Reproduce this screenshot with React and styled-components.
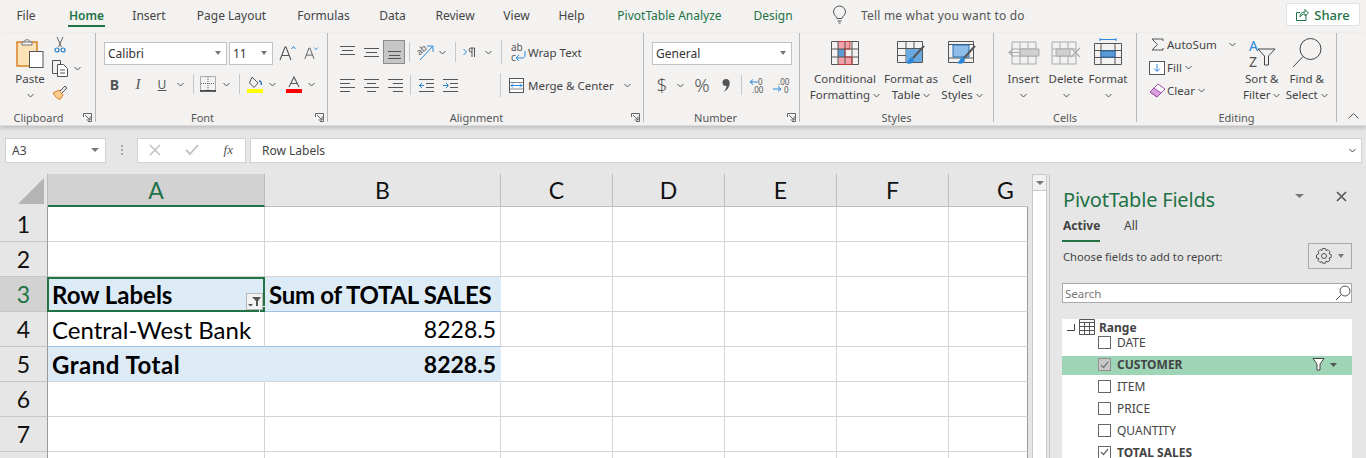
import React from 'react'
import styled, { createGlobalStyle } from 'styled-components'

const UI = `"Noto Sans", "Open Sans", sans-serif`
const CELL = `Lato, "Liberation Sans", sans-serif`
const GREEN = '#217346'

const Global = createGlobalStyle`
  html, body { margin: 0; padding: 0; background: #e6e6e6; }
  body { width: 1366px; height: 458px; overflow: hidden; font-family: ${UI}; color: #444; }
  svg { display: block; flex: none; overflow: visible; }
`

/* ---------- top tabs ---------- */
const TabBar = styled.div`
  display: flex; align-items: stretch; height: 33px; padding-left: 2px;
  background: #f3f2f1; box-sizing: border-box;
`
const Tab = styled.div`
  width: ${p => p.$w}px; height: 27px; display: flex; justify-content: center; align-items: center;
  position: relative; font-size: 12px; padding-top: 3px; box-sizing: border-box;
  color: ${p => (p.$active || p.$context ? GREEN : '#444')};
  font-weight: ${p => (p.$active ? 600 : 400)};
  white-space: nowrap;
  ${p => p.$active && `&::after { content: ''; position: absolute; left: 18px; right: 18px; bottom: 0; height: 2px; background: ${GREEN}; }`}
`
const TellMe = styled.div`
  display: flex; align-items: center; gap: 15px; margin-left: 32px; height: 27px; padding-top: 3px;
  box-sizing: border-box; font-size: 12px; color: #555; letter-spacing: 0.2px; flex: 1;
`
const ShareButton = styled.div`
  width: 74px; height: 23px; margin: 3px 6px 0 0; background: #fff; border: 1px solid #e1e1e1;
  box-sizing: border-box; border-radius: 2px; display: flex; align-items: center; justify-content: center; gap: 5px;
  color: ${GREEN}; font-size: 13px; font-weight: 500;
`

/* ---------- ribbon ---------- */
const Ribbon = styled.div`
  display: flex; height: 92px; background: #f3f2f1; position: relative;
  box-shadow: 0 2px 4px rgba(0,0,0,.18);
  border-bottom: 1px solid #dcdcdc; box-sizing: content-box;
`
const Group = styled.section`
  width: ${p => p.$w}px; flex: none; position: relative; box-sizing: border-box;
  display: flex; flex-direction: column; height: 89px;
  border-right: 1px solid #b9b9b9;
`
const GroupBody = styled.div`
  flex: 1; display: flex; padding-left: ${p => p.$pad || 0}px; min-height: 0;
`
const GroupLabel = styled.div`
  height: 18px; margin-bottom: -5px; font-size: 11px; line-height: 18px; text-align: center; color: #555;
  padding-right: ${p => p.$shift || 0}px; white-space: nowrap; flex: none;
`
const Launcher = styled.span`
  position: absolute; right: 3px; bottom: 0; width: 9px; height: 9px; display: block;
`
const CollapseArrow = styled.div`
  margin-left: 11px; align-self: flex-end; height: 18px; display: flex; align-items: center;
`
const Stack = styled.div`
  display: flex; flex-direction: column; flex: none; padding-top: ${p => p.$top ?? 9}px;
`
const Line = styled.div`
  display: flex; align-items: center; flex: none; height: ${p => p.$h || 24}px; margin-bottom: ${p => p.$mb || 0}px;
`
const Cell = styled.div`
  width: ${p => p.$w}px; height: 100%; flex: none; display: flex; align-items: center; justify-content: center;
  font-size: ${p => p.$fs || 12}px; font-weight: ${p => p.$weight || 400}; color: #555;
  ${p => p.$selected && `background:#c6c6c6; outline: 1px solid #8c8c8c; outline-offset: -1px;`}
`
const VSep = styled.span`
  width: 1px; height: ${p => p.$h || 20}px; background: #c8c8c8; flex: none;
  margin: 0 ${p => p.$r ?? 6}px 0 ${p => p.$l ?? 6}px;
`
const Combo = styled.div`
  width: ${p => p.$w}px; height: 23px; background: #fff; border: 1px solid #c2c2c2; box-sizing: border-box;
  display: flex; align-items: center; justify-content: space-between; padding: 0 5px 0 3px; flex: none;
  margin-right: ${p => p.$mr || 0}px; font-size: 12px; color: #333;
`
const SmallText = styled.span`
  font-size: 11.5px; color: #444; white-space: nowrap; margin-left: ${p => p.$ml || 0}px;
  margin-right: ${p => p.$mr || 0}px;
`
const BigButton = styled.div`
  width: ${p => p.$w}px; flex: none; display: flex; flex-direction: column; align-items: center;
  padding-top: ${p => p.$top ?? 8}px; box-sizing: border-box; font-size: 11.5px; line-height: 16px; color: #444; text-align: center;
  white-space: nowrap;
`
const IconSlot = styled.div`
  height: ${p => p.$h || 30}px; flex: none; display: flex; align-items: flex-start; justify-content: center;
`
const LabelLine = styled.div`
  height: 16px; flex: none; display: flex; align-items: center; justify-content: center; gap: 3px;
`

const Chev = ({ c = '#555' }) => (
  <svg width="7" height="5" viewBox="0 0 7 5"><path d="M.5 1l3 3 3-3" fill="none" stroke={c} /></svg>
)
const Caret = ({ c = '#777', w = 8 }) => (
  <svg width={w} height="4" viewBox="0 0 8 4" preserveAspectRatio="none"><path d="M0 0h8L4 4z" fill={c} /></svg>
)
const Corner = () => (
  <Launcher>
    <svg width="9" height="9" viewBox="0 0 9 9" fill="none" stroke="#666">
      <path d="M.5 4V.5H8.500V8.500H5" /><path d="M2 2l5 5M7 3.500V7H3.500" />
    </svg>
  </Launcher>
)

const PasteIcon = () => (
  <svg width="28" height="30" viewBox="0 0 28 30">
    <rect x="1" y="4" width="20" height="24" fill="#fbe3b5" stroke="#d9791a" strokeWidth="1.4" />
    <path d="M6 4h10V7H6zM8 4c0-3 6-3 6 0" fill="#f3f2f1" stroke="#777" />
    <rect x="13.500" y="13.500" width="13.500" height="16" fill="#fff" stroke="#555" />
  </svg>
)
const Scissors = () => (
  <svg width="12" height="17" viewBox="0 0 12 17" fill="none">
    <path d="M3 1l4.500 10M9 1L4.500 11" stroke="#666" />
    <circle cx="3" cy="14" r="2" stroke="#1f7fc4" strokeWidth="1.2" /><circle cx="9" cy="14" r="2" stroke="#1f7fc4" strokeWidth="1.2" />
  </svg>
)
const CopyIcon = () => (
  <svg width="17" height="17" viewBox="0 0 17 17" fill="#f3f2f1" stroke="#555">
    <path d="M.5.5h8v13h-8z" /><path d="M5.500 4.500h6l4 4v8h-10z" fill="#fff" /><path d="M8 10h5M8 13h5" />
  </svg>
)
const Painter = () => (
  <svg width="17" height="16" viewBox="0 0 17 16" fill="none">
    <path d="M1 9l6-3 4 5-3 4.500C5 15 3 12 1 9z" fill="#fbcf91" stroke="#d9791a" />
    <path d="M8 7l5-5 2 2-5 5" fill="#e7e7e7" stroke="#555" />
  </svg>
)
const FontBig = ({ up }) => (
  <svg width={up ? 18 : 15} height="16" viewBox="0 0 18 16" fill="none">
    <path d="M1 15L6 2h1l5 13M3 10.500h7" stroke="#555" strokeWidth="1.1" />
    <path d={up ? 'M12.500 4l2-2.500 2 2.500' : 'M12.500 1.500l2 2.500 2-2.500'} stroke="#2b88d8" />
  </svg>
)
const Borders = () => (
  <svg width="16" height="16" viewBox="0 0 16 16" fill="none">
    <path d="M.5.5h15v14H.5z" stroke="#666" strokeDasharray="1 1" /><path d="M8 1v13M1 7.500h14" stroke="#666" strokeDasharray="1 1" />
    <path d="M0 15h16" stroke="#222" strokeWidth="1.4" />
  </svg>
)
const FillColor = () => (
  <svg width="16" height="17" viewBox="0 0 16 17" fill="none">
    <path d="M5 1l6 6-4 4.500L2.500 7z" stroke="#555" /><path d="M12 5c2 0 2.500 1.500 2.500 4" stroke="#2b6fb5" strokeWidth="1.4" />
    <rect y="13" width="16" height="4" fill="#ffff00" />
  </svg>
)
const FontColor = () => (
  <svg width="16" height="17" viewBox="0 0 16 17" fill="none">
    <path d="M3 11L8 1l5 10M5 7.500h6" stroke="#555" strokeWidth="1.1" />
    <rect y="13" width="16" height="4" fill="#ff0000" />
  </svg>
)
const Lines = ({ rows }) => (
  <svg width="15" height="14" viewBox="0 0 15 14" stroke="#555" fill="none">
    {rows.map(([y, x1, x2]) => <path key={y} d={`M${x1} ${y}.5H${x2}`} />)}
  </svg>
)
const Orientation = () => (
  <svg width="18" height="18" viewBox="0 0 18 18" fill="none">
    <text x="0" y="10" fontSize="9" fill="#555" transform="rotate(-40 5 8)" fontFamily="Noto Sans">ab</text>
    <path d="M3 17L15 4M10 3h6v6" stroke="#2b88d8" />
  </svg>
)
const Ltr = () => (
  <svg width="13" height="10" viewBox="0 0 13 10" fill="none">
    <path d="M.5 2l3 3-3 3" stroke="#2b88d8" /><path d="M9 1v9M11.500 1v9M11.500 1H8a2 2 0 000 4h1" stroke="#555" />
  </svg>
)
const Indent = ({ out }) => (
  <svg width="15" height="14" viewBox="0 0 15 14" fill="none">
    <path d="M0 1.500h15M7 5.500h8M7 9.500h8M0 13.500h15" stroke="#555" />
    <path d={out ? 'M5 7.500H0M3 5L.5 7.500 3 10' : 'M0 7.500h5M3 5l2.500 2.500L3 10'} stroke="#2b88d8" />
  </svg>
)
const WrapIcon = () => (
  <svg width="15" height="20" viewBox="0 0 15 20" fill="none">
    <text x="0" y="9" fontSize="10" fill="#555" fontFamily="Noto Sans">ab</text>
    <text x="0" y="19" fontSize="10" fill="#555" fontFamily="Noto Sans">c</text>
    <path d="M14 9v4c0 2-1 3-3 3H6M8 13l-3 3 3 3" stroke="#2b88d8" />
  </svg>
)
const MergeIcon = () => (
  <svg width="15" height="15" viewBox="0 0 15 15" fill="#fff">
    <rect x=".5" y=".5" width="14" height="14" stroke="#555" />
    <path d="M1 4.500h13M1 11h13" stroke="#888" />
    <path d="M2 7.500h11M4 5.500l-2 2 2 2M11 5.500l2 2-2 2" fill="none" stroke="#2b88d8" />
  </svg>
)
const DecPlaces = ({ more }) => (
  <svg width="17" height="15" viewBox="0 0 17 15" fill="none">
    <text x={more ? 5 : 9} y="7" fontSize="8" fill="#555" fontFamily="Noto Sans">{more ? '.00' : '0'}</text>
    <text x={more ? 11 : 3} y="15" fontSize="8" fill="#555" fontFamily="Noto Sans">{more ? '0' : '.00'}</text>
    <path d={more ? 'M0 11h8M5 8.500L8 11l-3 2.500' : 'M9 4H1M4 1.500L1 4l3 2.500'} stroke="#2b88d8" />
  </svg>
)
const CommaStyle = () => (
  <svg width="8" height="13" viewBox="0 0 8 13" fill="#555">
    <circle cx="4" cy="3.500" r="3.500" /><path d="M7.500 3.500C8 8 5 11.500 1.500 13 4 10 5 8 4.500 5z" />
  </svg>
)
const CondIcon = () => (
  <svg width="28" height="24" viewBox="0 0 28 24" fill="none" stroke="#555">
    <path d="M7 1h12v7H7zM7 16h14v7H7z" fill="#f4a0a8" stroke="none" />
    <path d="M7 8h7v8H7z" fill="#5b9bd5" stroke="none" />
    <path d="M.5.5h27v23H.5zM.5 8h27M.5 16h27M7 .5v23M14 .5v23M21 .5v23" />
    <path d="M7 .5h12V8H14v8h7v7.500H7" stroke="#c43b3b" />
  </svg>
)
const TableBrush = () => (
  <svg width="28" height="25" viewBox="0 0 28 25" fill="none">
    <path d="M.5.5h25v21H.5zM.5 7.500h25M.5 14.500h25M9 .5v21M17 .5v21" stroke="#555" />
    <path d="M9 8h16v13H9z" fill="#6aa9df" />
    <path d="M27 5L16 17" stroke="#555" strokeWidth="2" /><path d="M15 16c-3 1-3 4-6 6 4 2 8 0 8-4z" fill="#2b88d8" />
  </svg>
)
const StyleBrush = () => (
  <svg width="28" height="25" viewBox="0 0 28 25" fill="none">
    <path d="M.5.5h25v21H.5zM.5 3.500h25M.5 17h25" stroke="#555" />
    <path d="M5 4h16v12H5z" fill="#8dbde8" stroke="#2b6fb5" />
    <path d="M27 5L16 17" stroke="#555" strokeWidth="2" /><path d="M15 16c-3 1-3 4-6 6 4 2 8 0 8-4z" fill="#2b88d8" />
  </svg>
)
const InsertCells = () => (
  <svg width="32" height="24" viewBox="0 0 32 24" fill="none" stroke="#aaa">
    <path d="M4 1h24v22H4zM4 8h24M4 15h24M12 1v22M20 1v22" />
    <path d="M12 8h19v7H12z" fill="#d0d0d0" /><path d="M12 11.500H1M5 8l-4 3.500L5 15" strokeWidth="1.2" />
  </svg>
)
const DeleteCells = () => (
  <svg width="30" height="24" viewBox="0 0 30 24" fill="none" stroke="#aaa">
    <path d="M1 1h24v22H1zM1 8h24M1 15h24M9 1v22M17 1v22" />
    <path d="M5 8h14v7H5z" fill="#d0d0d0" /><path d="M20 7l9 9M29 7l-9 9" strokeWidth="1.2" />
  </svg>
)
const FormatCells = () => (
  <svg width="28" height="27" viewBox="0 0 28 27" fill="none" stroke="#555">
    <path d="M6 1.500h16M6 0v3M22 0v3" stroke="#2b88d8" />
    <path d="M.5 5.500h27v21H.5zM.5 12.500h27M.5 19.500h27M7 5.500v21M21 5.500v21" />
    <path d="M7 13h14v6H7z" fill="#5b9bd5" stroke="#2b6fb5" />
  </svg>
)
const SortIcon = () => (
  <svg width="28" height="29" viewBox="0 0 28 29" fill="none">
    <text x="1" y="12" fontSize="14" fill="#2b88d8" fontFamily="Noto Sans">A</text>
    <text x="1" y="28" fontSize="14" fill="#555" fontFamily="Noto Sans">Z</text>
    <path d="M10 10h17l-6.500 7v9h-4v-9z" stroke="#444" />
  </svg>
)
const BigSearch = () => (
  <svg width="30" height="30" viewBox="0 0 30 30" fill="none" stroke="#444">
    <circle cx="18.500" cy="11" r="10.500" /><path d="M11 18.500L1 29" />
  </svg>
)
const Sigma = () => (
  <svg width="13" height="13" viewBox="0 0 13 13" fill="none"><path d="M12 3V1H1l5.500 5.500L1 12h11v-2" stroke="#555" /></svg>
)
const FillIcon = () => (
  <svg width="16" height="14" viewBox="0 0 16 14" fill="#fff">
    <rect x=".5" y=".5" width="15" height="13" stroke="#555" /><path d="M8 3v7M5 7.500l3 3 3-3" fill="none" stroke="#2b88d8" />
  </svg>
)
const Eraser = () => (
  <svg width="17" height="15" viewBox="0 0 17 15" fill="none">
    <path d="M1 9l8-8 7 5-8 8z" fill="#fff" stroke="#a24ab0" />
    <path d="M1 9l4-4 7 5-4 4z" fill="#d9a3df" stroke="#a24ab0" />
  </svg>
)
const Bulb = () => (
  <svg width="13" height="18" viewBox="0 0 13 18" fill="none" stroke="#555">
    <path d="M4 12.500C3.500 10 .5 9 .5 6a6 6 0 0112 0c0 3-3 4-3.500 6.500zM4.500 15h4M5.500 17h2" />
  </svg>
)
const ShareIcon = () => (
  <svg width="13" height="13" viewBox="0 0 13 13" fill="none" stroke={GREEN}>
    <path d="M10 7v5.500H.5V4.500H4" /><path d="M4 9c0-3.500 2-5 5-5V1.500L12.500 5 9 8V6C7 6 5 7 4 9z" />
  </svg>
)

/* ---------- formula bar ---------- */
const FormulaBar = styled.div`
  display: flex; align-items: center; height: 26px; margin-top: 11px; padding: 0 4px 0 5px; box-sizing: border-box;
`
const NameBox = styled.div`
  width: 101px; height: 25px; background: #fff; border: 1px solid #d0d0d0; box-sizing: border-box;
  display: flex; align-items: center; justify-content: space-between; padding: 0 6px; font-size: 12px; color: #444;
`
const Dots = styled.span`
  width: 2px; height: 10px; margin: 0 14px 0 15px; flex: none;
  background: repeating-linear-gradient(#aaa 0 2px, transparent 2px 4px);
`
const FxBox = styled.div`
  width: 109px; height: 25px; background: #fff; border: 1px solid #d0d0d0; box-sizing: border-box; margin-right: 4px;
  display: flex; align-items: center; justify-content: space-between; padding: 0 12px 0 11px;
`
const FxText = styled.i`
  font-family: "Liberation Serif", serif; font-size: ${p => p.$fs || 13}px; color: #555;
`
const FormulaInput = styled.div`
  flex: 1; height: 25px; background: #fff; border: 1px solid #d0d0d0; box-sizing: border-box;
  display: flex; align-items: center; justify-content: space-between; padding: 0 5px 0 11px; font-size: 12px; color: #444;
`

/* ---------- sheet ---------- */
const Workspace = styled.div`
  display: flex; margin-top: 11px; height: 284px; overflow: hidden; background: #e6e6e6;
`
const Sheet = styled.div`
  display: grid; width: 1028px; flex: none; align-content: start;
  grid-template-columns: 48px 217px 236px 112px 112px 112px 112px 79px;
  grid-auto-rows: 35px; grid-template-rows: 33px;
`
const ColCorner = styled.div`
  background: #e6e6e6; border-right: 1px solid #bcbcbc; position: relative;
  &::after { content: ''; position: absolute; right: 3px; bottom: 3px; width: 0; height: 0;
    border-left: 26px solid transparent; border-bottom: 26px solid #b4b4b4; }
`
const ColHead = styled.div`
  display: flex; align-items: center; justify-content: center; font-family: ${CELL}; font-size: 23px;
  padding-left: ${p => (p.$clipped ? 34 : 0)}px;
  box-sizing: border-box; background: ${p => (p.$on ? '#d2d2d2' : '#e6e6e6')};
  color: ${p => (p.$on ? GREEN : '#111')};
  border-right: ${p => (p.$clipped ? 'none' : '1px solid #bcbcbc')};
  border-bottom: ${p => (p.$on ? `2px solid ${GREEN}` : '1px solid #bcbcbc')};
`
const RowHead = styled.div`
  display: flex; align-items: center; justify-content: center; font-family: ${CELL}; font-size: 23px;
  box-sizing: border-box; background: ${p => (p.$on ? '#d2d2d2' : '#e6e6e6')};
  color: ${p => (p.$on ? GREEN : '#111')};
  border-right: 1px solid #9a9a9a; border-bottom: 1px solid #c6c6c6;
`
const DataCell = styled.div`
  position: relative; display: flex; align-items: center; box-sizing: border-box; white-space: nowrap;
  justify-content: ${p => (p.$right ? 'flex-end' : 'flex-start')};
  padding: 0 4px;
  background: ${p => (p.$fill ? '#ddebf7' : '#fff')};
  font-family: ${CELL}; font-size: ${p => (p.$right ? 23 : 24)}px; color: #000; font-weight: ${p => (p.$bold ? 700 : 400)};
  letter-spacing: ${p => p.$track || 0}px;
  border-right: 1px solid ${p => (p.$fill ? '#ddebf7' : '#d4d4d4')};
  border-bottom: 1px solid ${p => (p.$blue ? '#9bc2e6' : '#d4d4d4')};
  ${p => p.$last && 'border-right: 1px solid #9a9a9a;'}
`
const Selection = styled.div`
  position: absolute; inset: 0 -1px -1px -1px; border: 2px solid ${GREEN}; pointer-events: none;
  &::after { content: ''; position: absolute; right: -3px; bottom: -3px; width: 5px; height: 5px;
    background: ${GREEN}; border: 1px solid #fff; }
`
const FilterButton = styled.span`
  position: absolute; right: 1px; bottom: 1px; width: 17px; height: 17px; background: #f3f3f3; border: 1px solid #b8b8b8;
  box-sizing: border-box; display: flex; align-items: center; justify-content: center;
`
const Scrollbar = styled.div`
  width: 13px; margin: 1px 0 0 4px; background: #fff; border-left: 1px solid #c8c8c8; border-right: 1px solid #c8c8c8; flex: none; box-sizing: content-box;
`
const ScrollUp = styled.div`
  height: 15px; background: #f1f1f1; border: 1px solid #c8c8c8; margin: -1px; display: flex; align-items: center; justify-content: center;
`

/* ---------- pivot panel ---------- */
const Panel = styled.aside`
  flex: 1; margin-left: 2px; border-left: 1px solid #c4c4c4; box-sizing: border-box; padding: 0 14px 0 12px;
`
const PanelHead = styled.div`
  display: flex; align-items: center; justify-content: space-between; height: 26px; margin-top: 13px; padding-left: 1px;
`
const PanelTitle = styled.h2`
  margin: 0; font-weight: 400; font-size: 20px; line-height: 26px; color: ${GREEN}; white-space: nowrap; font-family: ${UI};
  letter-spacing: -0.2px;
`
const PanelTools = styled.div`
  display: flex; align-items: center; gap: 32px; margin: 0 5px 8px 0;
`
const PanelTabs = styled.div`
  display: flex; height: 28px; margin-top: 1px; font-size: 12px; color: #444;
`
const PanelTab = styled.div`
  width: ${p => p.$w}px; height: 100%; display: flex; align-items: center; padding: 0 0 4px ${p => p.$pad || 1}px; box-sizing: border-box;
  font-weight: ${p => (p.$on ? 700 : 400)}; white-space: nowrap;
  border-bottom: 2px solid ${p => (p.$on ? GREEN : 'transparent')};
`
const ChooseRow = styled.div`
  display: flex; align-items: center; justify-content: space-between; height: 26px; margin-top: 1px; padding-left: 1px;
  font-size: 11.2px; color: #444;
`
const GearBox = styled.div`
  width: 44px; height: 26px; border: 1px solid #a8a8a8; box-sizing: border-box; display: flex;
  align-items: center; justify-content: center; gap: 6px;
`
const SearchBox = styled.div`
  height: 20px; margin-top: 14px; background: #fff; border: 1px solid #a8a8a8; box-sizing: border-box; display: flex;
  align-items: center; justify-content: space-between; padding: 0 0 0 2px; font-size: 11.5px; color: #777;
`
const FieldList = styled.div`
  margin-top: 16px; background: #fff; height: 200px;
`
const RangeRow = styled.div`
  display: flex; align-items: center; height: 16px; margin-bottom: -4px; padding-left: 5px; font-size: 12px; font-weight: 700; color: #444;
  gap: 4px;
`
const FieldRow = styled.div`
  display: flex; align-items: center; padding: 0 15px ${p => (p.$hl ? 2 : 0)}px 36px; box-sizing: border-box; white-space: nowrap;
  height: ${p => (p.$hl ? 19 : 22)}px; margin-top: ${p => (p.$hl ? 3 : 0)}px;
  background: ${p => (p.$hl ? '#9fd5b7' : 'transparent')};
  font-size: 12px; font-weight: ${p => (p.$bold ? 700 : 400)}; color: #444; gap: 6px;
`
const Check = styled.span`
  width: 13px; height: 13px; box-sizing: border-box; border: 1px solid ${p => (p.$dim ? '#909090' : '#666')};
  background: ${p => (p.$dim ? '#c8c8c8' : '#fff')}; display: flex; align-items: center; justify-content: center; flex: none;
`
const RowFilter = styled.span`
  margin-left: auto; display: flex; align-items: center; gap: 5px;
`

const Tick = ({ c = '#666' }) => (
  <svg width="9" height="8" viewBox="0 0 9 8" fill="none"><path d="M1 4l2.500 2.500L8 1" stroke={c} strokeWidth="1.200" /></svg>
)
const Funnel = () => (
  <svg width="13" height="13" viewBox="0 0 12 13" fill="#fff" stroke="#444"><path d="M.5.5h11L7.500 6v6h-3V6z" /></svg>
)
const TinySearch = () => (
  <svg width="16" height="16" viewBox="0 0 16 16" fill="none" stroke="#555"><circle cx="10" cy="6" r="5" /><path d="M6.500 9.500L1 15" /></svg>
)
const Gear = () => (
  <svg width="16" height="16" viewBox="0 0 16 16" fill="none" stroke="#555">
    <circle cx="8" cy="8" r="2.500" />
    <path d="M6.500.5h3l.5 2.200 2-1 2 2-1 2 2.200.8v3l-2.200.5 1 2-2 2-2-1-.5 2.200h-3L6 13.500l-2 1-2-2 1-2-2.500-.5v-3L3 5.500l-1-2 2-2 2 1z" />
  </svg>
)
const TableGlyph = () => (
  <svg width="16" height="16" viewBox="0 0 16 16" fill="none" stroke="#555">
    <path d="M.5.5h15v15H.5zM.5 3.500h15M.5 7.500h15M.5 11.500h15M5.500 3.500v12M10.500 3.500v12" />
  </svg>
)

const tabs = [
  ['File', 48], ['Home', 73, 'active'], ['Insert', 52], ['Page Layout', 113], ['Formulas', 71], ['Data', 67],
  ['Review', 58], ['View', 65], ['Help', 45], ['PivotTable Analyze', 151, 'context'], ['Design', 56, 'context'],
]
const rows = [1, 2, 3, 4, 5, 6, 7, 8]
const cols = ['C', 'D', 'E', 'F', 'G']

const Big = ({ w, icon, lines, top = 8, h = 30 }) => (
  <BigButton $w={w} $top={top}>
    <IconSlot $h={h}>{icon}</IconSlot>
    {lines.map((l, i) => (
      <LabelLine key={i}>{l}{i === lines.length - 1 && <Chev />}</LabelLine>
    ))}
  </BigButton>
)

const RowCells = ({ n }) => {
  if (n === 3) return (
    <>
      <DataCell $fill $bold $blue>
        Row Labels
        <Selection />
        <FilterButton>
          <svg width="13" height="11" viewBox="0 0 13 11"><path d="M4 1h9L10 5v5H8V5z" fill="#555" /><path d="M0 8h5L2.500 10.500z" fill="#555" /></svg>
        </FilterButton>
      </DataCell>
      <DataCell $fill $bold $blue $track={-0.3}>Sum of TOTAL SALES</DataCell>
    </>
  )
  if (n === 4) return (
    <>
      <DataCell $blue>Central-West Bank</DataCell>
      <DataCell $right $blue>8228.5</DataCell>
    </>
  )
  if (n === 5) return (
    <>
      <DataCell $fill $bold $track={0.5}>Grand Total</DataCell>
      <DataCell $fill $bold $right>8228.5</DataCell>
    </>
  )
  return (<><DataCell /><DataCell /></>)
}

export default function App() {
  return (
    <>
      <Global />
      <TabBar>
        {tabs.map(([t, w, kind]) => (
          <Tab key={t} $w={w} $active={kind === 'active'} $context={kind === 'context'}>{t}</Tab>
        ))}
        <TellMe><Bulb />Tell me what you want to do</TellMe>
        <ShareButton><ShareIcon />Share</ShareButton>
      </TabBar>

      <Ribbon>
        <Group $w={96}>
          <GroupBody $pad={14}>
            <BigButton $w={32} $top={5}>
              <IconSlot $h={33}><PasteIcon /></IconSlot>
              <LabelLine>Paste</LabelLine>
              <LabelLine><Chev /></LabelLine>
            </BigButton>
            <Stack $top={0}>
              <Line $h={23}><Cell $w={28}><Scissors /></Cell></Line>
              <Line $h={24}><Cell $w={28}><CopyIcon /></Cell><Chev /></Line>
              <Line $h={24}><Cell $w={28}><Painter /></Cell></Line>
            </Stack>
          </GroupBody>
          <GroupLabel $shift={18}>Clipboard</GroupLabel>
          <Corner />
        </Group>

        <Group $w={232}>
          <GroupBody $pad={8}>
            <Stack $top={8}>
              <Line $h={24} $mb={7}>
                <Combo $w={123} $mr={2}>Calibri<Caret w={6} /></Combo>
                <Combo $w={44}>11<Caret w={6} /></Combo>
                <Cell $w={29}><FontBig up /></Cell>
                <Cell $w={19}><FontBig /></Cell>
              </Line>
              <Line $h={24}>
                <Cell $w={21} $fs={14} $weight={700}>B</Cell>
                <Cell $w={26}><FxText $fs={15}>I</FxText></Cell>
                <Cell $w={22}><u>U</u></Cell>
                <Cell $w={14}><Chev /></Cell>
                <VSep $l={6} $r={6} />
                <Cell $w={16}><Borders /></Cell>
                <Cell $w={20}><Chev /></Cell>
                <VSep $l={3} $r={6} />
                <Cell $w={18}><FillColor /></Cell>
                <Cell $w={16}><Chev /></Cell>
                <Cell $w={28}><FontColor /></Cell>
                <Cell $w={6}><Chev /></Cell>
              </Line>
            </Stack>
          </GroupBody>
          <GroupLabel $shift={18}>Font</GroupLabel>
          <Corner />
        </Group>

        <Group $w={316}>
          <GroupBody $pad={7}>
            <Stack $top={7}>
              <Line $h={24} $mb={9}>
                <Cell $w={24}><Lines rows={[[1, 0, 15], [5, 2, 13], [9, 0, 15]]} /></Cell>
                <Cell $w={24}><Lines rows={[[3, 0, 15], [7, 2, 13], [11, 0, 15]]} /></Cell>
                <Cell $w={22} $selected><Lines rows={[[6, 1, 14], [10, 2, 13], [13, 1, 14]]} /></Cell>
                <VSep $l={4} $r={4} />
                <Cell $w={24}><Orientation /></Cell>
                <Cell $w={8}><Chev /></Cell>
                <VSep $l={9} $r={0} />
                <Cell $w={26}><Ltr /></Cell>
                <Cell $w={12}><Chev /></Cell>
                <VSep $h={24} $l={7} $r={8} />
                <Cell $w={16}><WrapIcon /></Cell>
                <SmallText $ml={2}>Wrap Text</SmallText>
              </Line>
              <Line $h={24}>
                <Cell $w={24}><Lines rows={[[1, 0, 15], [5, 0, 10], [9, 0, 15], [13, 0, 10]]} /></Cell>
                <Cell $w={24}><Lines rows={[[1, 0, 15], [5, 3, 12], [9, 0, 15], [13, 3, 12]]} /></Cell>
                <Cell $w={24}><Lines rows={[[1, 0, 15], [5, 5, 15], [9, 0, 15], [13, 5, 15]]} /></Cell>
                <VSep $l={3} $r={0} />
                <Cell $w={30}><Indent out /></Cell>
                <Cell $w={18}><Indent /></Cell>
                <VSep $h={24} $l={41} $r={8} />
                <MergeIcon />
                <SmallText $ml={4} $mr={10}>Merge &amp; Center</SmallText>
                <Chev />
              </Line>
            </Stack>
          </GroupBody>
          <GroupLabel $shift={18}>Alignment</GroupLabel>
          <Corner />
        </Group>

        <Group $w={156}>
          <GroupBody $pad={8}>
            <Stack $top={8}>
              <Line $h={24} $mb={7}><Combo $w={140}>General<Caret w={6} /></Combo></Line>
              <Line $h={26}>
                <Cell $w={20} $fs={19} $weight={300}>$</Cell>
                <Cell $w={16}><Chev /></Cell>
                <Cell $w={28} $fs={19} $weight={300}>%</Cell>
                <Cell $w={20}><CommaStyle /></Cell>
                <VSep $l={5} $r={3} />
                <Cell $w={24}><DecPlaces /></Cell>
                <Cell $w={24}><DecPlaces more /></Cell>
              </Line>
            </Stack>
          </GroupBody>
          <GroupLabel $shift={12}>Number</GroupLabel>
          <Corner />
        </Group>

        <Group $w={194}>
          <GroupBody $pad={8}>
            <Big w={74} icon={<CondIcon />} lines={['Conditional', 'Formatting']} />
            <Big w={58} icon={<TableBrush />} lines={['Format as', 'Table']} />
            <Big w={44} icon={<StyleBrush />} lines={['Cell', 'Styles']} />
          </GroupBody>
          <GroupLabel>Styles</GroupLabel>
        </Group>

        <Group $w={143}>
          <GroupBody $pad={8}>
            <Big w={43} icon={<InsertCells />} lines={['Insert', '']} />
            <Big w={42} icon={<DeleteCells />} lines={['Delete', '']} />
            <Big w={42} top={5} h={33} icon={<FormatCells />} lines={['Format', '']} />
          </GroupBody>
          <GroupLabel>Cells</GroupLabel>
        </Group>

        <Group $w={200}>
          <GroupBody $pad={10}>
            <Stack $top={0}>
              <Line $h={23}><Cell $w={20}><Sigma /></Cell><SmallText $mr={12}>AutoSum</SmallText><Chev /></Line>
              <Line $h={23}><Cell $w={20}><FillIcon /></Cell><SmallText $mr={3}>Fill</SmallText><Chev /></Line>
              <Line $h={23}><Cell $w={20}><Eraser /></Cell><SmallText $mr={3}>Clear</SmallText><Chev /></Line>
            </Stack>
            <Big w={52} top={6} h={32} icon={<SortIcon />} lines={['Sort &', 'Filter']} />
            <Big w={38} top={5} h={33} icon={<BigSearch />} lines={['Find &', 'Select']} />
          </GroupBody>
          <GroupLabel>Editing</GroupLabel>
        </Group>
        <CollapseArrow>
          <svg width="11" height="6" viewBox="0 0 11 6" fill="none" stroke="#555"><path d="M.5 5.500l5-5 5 5" /></svg>
        </CollapseArrow>
      </Ribbon>

      <FormulaBar>
        <NameBox>A3<Caret w={8} /></NameBox>
        <Dots />
        <FxBox>
          <svg width="12" height="12" viewBox="0 0 12 12" stroke="#c0c0c0" strokeWidth="1.500"><path d="M1 1l10 10M11 1L1 11" /></svg>
          <svg width="14" height="12" viewBox="0 0 14 12" fill="none" stroke="#c0c0c0" strokeWidth="1.800"><path d="M1 6l4 4 8-9" /></svg>
          <FxText>fx</FxText>
        </FxBox>
        <FormulaInput>Row Labels<Chev c="#444" /></FormulaInput>
      </FormulaBar>

      <Workspace>
        <Sheet>
          <ColCorner />
          <ColHead $on>A</ColHead>
          <ColHead>B</ColHead>
          {cols.map(c => <ColHead key={c} $clipped={c === 'G'}>{c}</ColHead>)}
          {rows.map(n => (
            <React.Fragment key={n}>
              <RowHead $on={n === 3}>{n}</RowHead>
              <RowCells n={n} />
              {cols.map(c => <DataCell key={c} $last={c === 'G'} />)}
            </React.Fragment>
          ))}
        </Sheet>
        <Scrollbar>
          <ScrollUp><Caret w={8} /></ScrollUp>
        </Scrollbar>
        <Panel>
          <PanelHead>
            <PanelTitle>PivotTable Fields</PanelTitle>
            <PanelTools>
              <Caret w={9} />
              <svg width="11" height="11" viewBox="0 0 11 11" stroke="#555" strokeWidth="1.600"><path d="M1 1l9 9M10 1l-9 9" /></svg>
            </PanelTools>
          </PanelHead>
          <PanelTabs>
            <PanelTab $w={38} $on>Active</PanelTab>
            <PanelTab $w={50} $pad={24}>All</PanelTab>
          </PanelTabs>
          <ChooseRow>
            Choose fields to add to report:
            <GearBox><Gear /><Caret w={6} /></GearBox>
          </ChooseRow>
          <SearchBox>Search<TinySearch /></SearchBox>
          <FieldList>
            <RangeRow>
              <svg width="8" height="8" viewBox="0 0 8 8" fill="none" stroke="#444"><path d="M0 7.500h7.500V1" /></svg>
              <TableGlyph />Range
            </RangeRow>
            <FieldRow><Check />DATE</FieldRow>
            <FieldRow $hl $bold><Check $dim><Tick c="#777" /></Check>CUSTOMER<RowFilter><Funnel /><Caret w={7} c="#555" /></RowFilter></FieldRow>
            <FieldRow><Check />ITEM</FieldRow>
            <FieldRow><Check />PRICE</FieldRow>
            <FieldRow><Check />QUANTITY</FieldRow>
            <FieldRow $bold><Check><Tick /></Check>TOTAL SALES</FieldRow>
          </FieldList>
        </Panel>
      </Workspace>
    </>
  )
}
